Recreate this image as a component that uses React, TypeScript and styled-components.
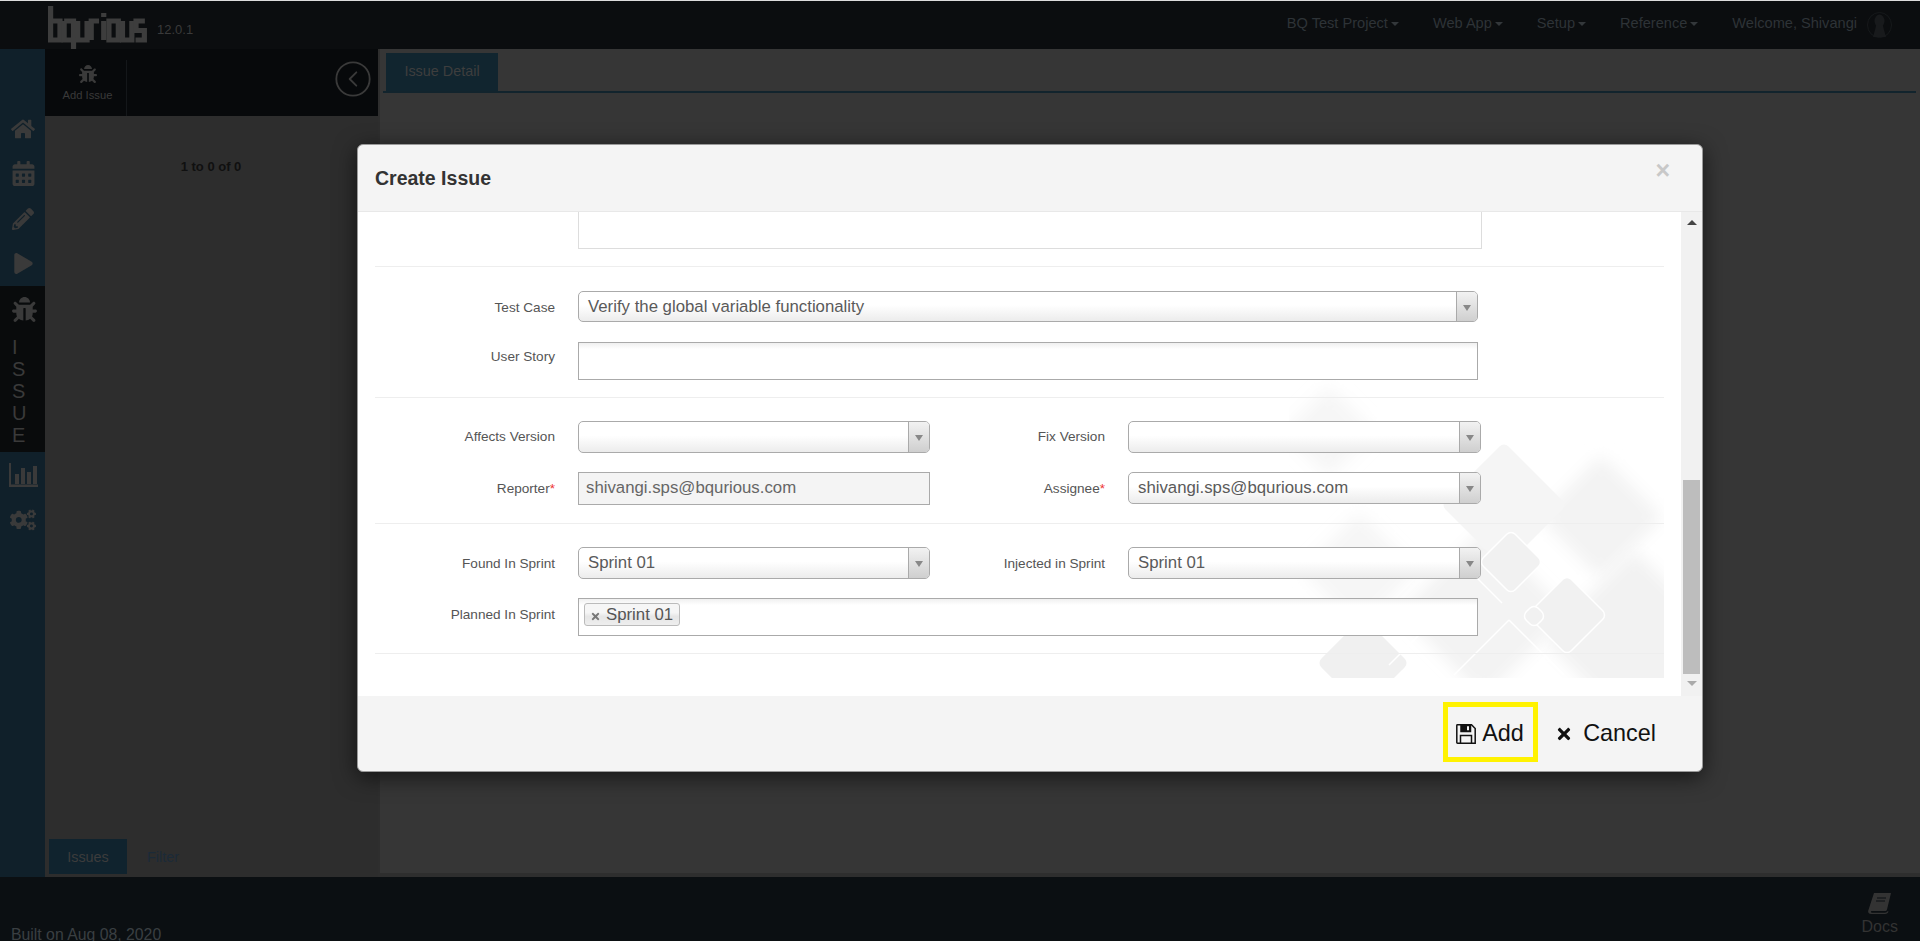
import React from 'react';
import styled, { createGlobalStyle } from 'styled-components';
import { CircleChevronLeft } from 'lucide-react';
import { FaBug, FaCalendarAlt, FaCogs, FaHome, FaPencilAlt, FaPlay, FaTimes } from 'react-icons/fa';

const GlobalStyle = createGlobalStyle`
  html, body {
    margin: 0;
    padding: 0;
    height: 100%;
    overflow: hidden;
    background: #2d2d2d;
    font-family: "Liberation Sans", Arial, sans-serif;
  }
  * { box-sizing: border-box; }
`;

const Page = styled.div`
  position: relative;
  width: 1920px;
  height: 941px;
  display: flex;
  flex-direction: column;
  overflow: hidden;
  border-top: 1px solid #dcdcdc;
`;

/* top bar */
const Header = styled.header`
  height: 48px;
  flex: none;
  display: flex;
  align-items: flex-start;
  background: #0b0d0f;
  padding: 5px 28px 0 48px;
`;

const Version = styled.span`
  margin: 16px 0 0 9px;
  font-size: 13px;
  line-height: 16px;
  color: #3a3a3a;
`;

const Nav = styled.nav`
  margin-left: auto;
  display: flex;
  align-items: center;
  gap: 34px;
  padding-top: 3px;
  height: 31px;
`;

const NavItem = styled.span`
  display: flex;
  align-items: center;
  gap: 3px;
  font-size: 14.6px;
  color: #2e3337;
`;

const Caret = styled.i`
  width: 0;
  height: 0;
  margin-top: 1px;
  border-top: 4px solid #33373a;
  border-left: 4px solid transparent;
  border-right: 4px solid transparent;
`;

const Welcome = styled.span`
  font-size: 14.6px;
  color: #2e3337;
`;

const Avatar = styled.svg`
  width: 25px;
  height: 26px;
  margin: 3px 0 0 -24px;
`;

/* main area */
const Main = styled.div`
  height: 828px;
  flex: none;
  display: flex;
`;

const Sidebar = styled.aside`
  width: 45px;
  flex: none;
  background: #10202a;
  padding-top: 57px;
  color: #3a3a3a;
`;

const SideItem = styled.div`
  height: 45px;
  display: flex;
  align-items: center;
  justify-content: center;
  padding-left: 1px;
`;

const SideActive = styled.div`
  height: 166px;
  background: #090b0c;
  padding: 11px 0 0 12px;
`;

const SideLetters = styled.div`
  margin-top: 10px;
  font-size: 20px;
  line-height: 22px;
  span { display: block; }
`;

const ListPanel = styled.section`
  width: 333px;
  flex: none;
  display: flex;
  flex-direction: column;
  background: #2d2d2d;
`;

const Toolbar = styled.div`
  height: 67px;
  flex: none;
  display: flex;
  justify-content: space-between;
  background: #07090b;
  padding: 11px 5px 0 0;
`;

const ToolButton = styled.div`
  width: 82px;
  display: flex;
  flex-direction: column;
  align-items: center;
  gap: 6px;
  padding: 5px 0 0 4px;
  border-right: 1px solid #14171a;
  color: #3a3a3a;
  font-size: 11.2px;
  line-height: 13px;
`;

const CollapseButton = styled.div`
  margin-top: -1px;
  color: #3a3a3a;
  height: 40px;
`;

const Pager = styled.div`
  margin-top: 44px;
  text-align: center;
  padding-right: 1px;
  font-size: 13px;
  font-weight: bold;
  line-height: 14px;
  color: #101010;
`;

const BottomTabs = styled.div`
  margin-top: auto;
  display: flex;
  align-items: center;
  padding: 0 0 3px 4px;
`;

const BottomTab = styled.div<{ $active?: boolean }>`
  width: ${p => (p.$active ? '78px' : 'auto')};
  height: 35px;
  margin-left: ${p => (p.$active ? '0' : '20px')};
  text-align: center;
  font-size: 14.4px;
  line-height: 37px;
  background: ${p => (p.$active ? '#10232e' : 'transparent')};
  color: ${p => (p.$active ? '#3c3c3c' : '#1b2a38')};
`;

const DetailPanel = styled.section`
  flex: 1;
  display: flex;
  background: #2e2e2e;
  padding: 0 0 4px 2px;
`;

const DetailInner = styled.div`
  flex: 1;
  background: #363636;
  padding: 4px 4px 0 3px;
`;

const TabStrip = styled.div`
  height: 40px;
  padding-left: 3px;
  border-bottom: 2px solid #12242d;
`;

const DetailTab = styled.div`
  width: 112px;
  height: 38px;
  text-align: center;
  font-size: 14.4px;
  line-height: 36px;
  background: #11252f;
  color: #3e3e3e;
`;

/* bottom bar */
const Footer = styled.footer`
  flex: 1;
  display: flex;
  justify-content: space-between;
  background: #0b0f12;
  overflow: hidden;
  padding: 16px 22px 0 11px;
`;

const BuiltOn = styled.div`
  margin-top: 33px;
  font-size: 15.8px;
  line-height: 18px;
  color: #3a3f42;
`;

const Docs = styled.div`
  display: flex;
  flex-direction: column;
  align-items: center;
  gap: 4px;
  font-size: 16px;
  line-height: 18px;
  color: #333;
`;

/* modal */
const Overlay = styled.div`
  position: absolute;
  inset: 0;
  padding: 143px 0 0 357px;
`;

const Modal = styled.div`
  width: 1346px;
  height: 628px;
  display: flex;
  flex-direction: column;
  background: #f4f4f4;
  border: 1px solid #9a9a9a;
  border-radius: 6px;
  overflow: hidden;
  box-shadow: 0 5px 22px rgba(0, 0, 0, 0.6);
`;

const ModalHeader = styled.div`
  height: 67px;
  flex: none;
  display: flex;
  justify-content: space-between;
  border-bottom: 1px solid #e8e8e8;
  padding: 0 32px 0 17px;
`;

const ModalTitle = styled.h4`
  margin: 23px 0 0;
  font-size: 19.5px;
  line-height: 20px;
  font-weight: bold;
  color: #333;
`;

const CloseMark = styled.span`
  margin-top: 12px;
  font-size: 25px;
  line-height: 26px;
  font-weight: bold;
  color: #c8c8c8;
`;

const ModalMiddle = styled.div`
  height: 484px;
  flex: none;
  display: flex;
`;

const FormBody = styled.div`
  position: relative;
  flex: 1;
  background: #fff;
  padding: 0 17px;
  overflow: hidden;
`;

const Watermark = styled.svg`
  position: absolute;
  right: 17px;
  bottom: 18px;
`;

const Section = styled.div<{ $top: number; $bottom: number; $gap: number }>`
  position: relative;
  display: flex;
  flex-direction: column;
  gap: ${p => p.$gap}px;
  padding: ${p => p.$top}px 0 ${p => p.$bottom}px;
  border-bottom: 1px solid #eee;
`;

const Row = styled.div`
  display: grid;
  grid-template-columns: 203px 352px 198px 353px;
  align-items: start;
`;

const Label = styled.label<{ $offset: number }>`
  padding: ${p => p.$offset}px 23px 0 0;
  text-align: right;
  font-size: 13.6px;
  line-height: 16px;
  color: #555;
  em { font-style: normal; color: #e33; }
`;

const TextStub = styled.div`
  grid-column: 2 / span 3;
  height: 37px;
  margin-right: -1px;
  background: #fff;
  border: 1px solid #ddd;
  border-top: 0;
`;

const Select = styled.div<{ $wide?: boolean; $height: number }>`
  grid-column: ${p => (p.$wide ? '2 / span 3' : 'auto')};
  width: ${p => (p.$wide ? '900px' : 'auto')};
  height: ${p => p.$height}px;
  display: flex;
  justify-content: space-between;
  background: linear-gradient(#fff 45%, #ececec);
  border: 1px solid #aaa;
  border-radius: 5px;
  font-size: 16.8px;
  color: #5a5a5a;
  overflow: hidden;
`;

const SelectValue = styled.span`
  padding-left: 9px;
  line-height: 30px;
`;

const SelectArrow = styled.span`
  width: 21px;
  height: 100%;
  flex: none;
  display: flex;
  align-items: center;
  justify-content: center;
  border-left: 1px solid #aaa;
  background: linear-gradient(#f2f2f2, #cfcfcf);
  &::after {
    content: '';
    margin-top: 2px;
    border-top: 6px solid #888;
    border-left: 4px solid transparent;
    border-right: 4px solid transparent;
  }
`;

const TextBox = styled.div`
  grid-column: 2 / span 3;
  width: 900px;
  height: 38px;
  padding: 4px 5px;
  background: linear-gradient(#f0f0f0, #fff 6px);
  border: 1px solid #aaa;
`;

const ReadOnlyBox = styled.div`
  height: 33px;
  padding-left: 7px;
  background: #f4f4f4;
  border: 1px solid #aaa;
  font-size: 16.8px;
  line-height: 30px;
  color: #666;
`;

const Chip = styled.span`
  display: inline-flex;
  align-items: center;
  gap: 5px;
  height: 23px;
  padding: 0 6px 0 5px;
  background: linear-gradient(#f6f6f6 40%, #e6e6e6 60%, #eee);
  border: 1px solid #bbb;
  border-radius: 3px;
  font-size: 16.8px;
  color: #555;
  svg { margin-top: 3px; color: #777; }
`;

const ScrollTrack = styled.div`
  width: 21px;
  flex: none;
  display: flex;
  flex-direction: column;
  align-items: center;
  background: #f1f1f1;
  padding-top: 8px;
`;

const ScrollArrow = styled.i<{ $up?: boolean }>`
  width: 0;
  height: 0;
  border-left: 5px solid transparent;
  border-right: 5px solid transparent;
  border-bottom: ${p => (p.$up ? '5px solid #444' : '0')};
  border-top: ${p => (p.$up ? '0' : '5px solid #aaa')};
`;

const ScrollThumb = styled.div`
  width: 17px;
  height: 194px;
  margin: 255px 0 7px;
  background: #bdbdbd;
`;

const ModalFooter = styled.div`
  flex: 1;
  display: flex;
  justify-content: flex-end;
  align-items: flex-start;
  gap: 17px;
  padding: 6px 46px 0 0;
`;

const FooterButton = styled.div<{ $hot?: boolean; $gap: number }>`
  height: 60px;
  display: flex;
  align-items: center;
  gap: ${p => p.$gap}px;
  width: ${p => (p.$hot ? '95px' : 'auto')};
  padding: ${p => (p.$hot ? '3px 0 0 8px' : '3px 0 0')};
  border: ${p => (p.$hot ? '5px solid #fff200' : '0')};
  font-size: 23.4px;
  color: #111;
`;

// bqurious block logo, drawn as stroked segments
const LOGO = [
  'M2.5 0V34H11.5V15H2.5',
  'M15.5 15H24.5V36M15.5 15V34H24.5M24.5 36V47',
  'M28.5 15V34H37.5V15',
  'M41.5 34V15H49',
  'M53.5 15V34M53.5 7V11',
  'M58.5 15H67.5V34H58.5Z',
  'M71.5 15V34H80.5V15',
  'M93 15H84.5V24.5H92.5V34H84',
];

const Logo = () => (
  <svg width="100" height="47" viewBox="0 0 96 47" preserveAspectRatio="none" fill="none" stroke="#3d3d3d" strokeWidth="5">
    {LOGO.map(d => <path key={d} d={d} />)}
  </svg>
);

const BarsIcon = () => (
  <svg width="29" height="24" viewBox="0 0 29 24" fill="currentColor">
    <path d="M0 0h2v21.5h29V24H0z" />
    <rect x="6" y="11" width="4" height="10" />
    <rect x="12" y="5" width="4" height="16" />
    <rect x="18" y="9" width="4" height="12" />
    <rect x="24" y="3" width="4" height="18" />
  </svg>
);

const BookIcon = () => (
  <svg width="24" height="21" viewBox="0 0 24 21" fill="#333">
    <path d="M6 0h17l-4 16.5c-.3 1-1 1.5-2 1.5H4c-.8 0-1.300.6-1 1.200.1.300.5.500 1 .5h13c1.500 0 2-.4 2.800-1.700l.7.600C20 20 19 21 17 21H3c-2 0-3.200-1.500-2.800-3.200z" />
    <path d="M9 5h9M8 8h9" stroke="#0b0f12" strokeWidth="1.200" />
  </svg>
);

const SaveIcon = () => (
  <svg width="20" height="20" viewBox="0 0 20 20" fill="none" stroke="#111" strokeWidth="1.500" style={{ flex: 'none' }}>
    <path d="M1.500.8H15.500L19.200 4.500V19.200H1.500C1 19.200.8 19 .8 18.500V1.500C.8 1 1 .8 1.500.8Z" />
    <path d="M5 1h9.500v6.500H5z" fill="#111" />
    <path d="M11 2.200h2v4h-2z" fill="#f4f4f4" stroke="none" />
    <path d="M4.500 19V11.500H15.500V19" />
  </svg>
);

// one soft or sharp rounded diamond of the form's background art
const Diamond = ({ x, y, r, fill = '#f0f0f0', stroke, blur }: { x: number; y: number; r: number; fill?: string; stroke?: string; blur?: boolean }) => {
  const side = r * Math.SQRT2;
  return (
    <rect
      x={x - side / 2}
      y={y - side / 2}
      width={side}
      height={side}
      rx="6"
      fill={fill}
      stroke={stroke}
      strokeWidth={stroke ? 1.500 : 0}
      filter={blur ? 'url(#wm-soft)' : undefined}
      transform={`rotate(45 ${x} ${y})`}
    />
  );
};

const FormArt = () => (
  <Watermark width="375" height="303" viewBox="0 0 375 303">
    <defs>
      <filter id="wm-soft" x="-30%" y="-30%" width="160%" height="160%">
        <feGaussianBlur stdDeviation="8" />
      </filter>
      <clipPath id="wm-clip"><rect width="375" height="303" /></clipPath>
    </defs>
    <g clipPath="url(#wm-clip)">
      <Diamond x={40} y={57} r={46} fill="#f6f6f6" blur />
      <Diamond x={70} y={195} r={58} fill="#f6f6f6" blur />
      <Diamond x={312} y={142} r={62} fill="#f3f3f3" blur />
      <Diamond x={345} y={265} r={90} fill="#f2f2f2" blur />
      <Diamond x={195} y={238} r={85} fill="#f3f3f3" blur />
      <Diamond x={215} y={130} r={63} fill="#f5f5f5" />
      <Diamond x={74} y={288} r={46} fill="#f0f0f0" />
      <Diamond x={222} y={187} r={32} fill="#f1f1f1" stroke="#fff" />
      <Diamond x={278} y={240} r={40} fill="#f1f1f1" stroke="#fff" />
      <Diamond x={245} y={241} r={12} fill="#f1f1f1" stroke="#fff" />
      <path d="M105 158l52-52M105 158l36 36" fill="none" stroke="#fff" strokeWidth="1.500" />
      <path d="M165 300l55-55M220 245l55 55M100 250l55 53M100 290l55-55M165 180l48 48" fill="none" stroke="#fff" strokeWidth="1.500" />
    </g>
  </Watermark>
);

export default function App() {
  return (
    <>
      <GlobalStyle />
      <Page>
        <Header>
          <Logo />
          <Version>12.0.1</Version>
          <Nav>
            {['BQ Test Project', 'Web App', 'Setup', 'Reference'].map(item => (
              <NavItem key={item}>{item}<Caret /></NavItem>
            ))}
            <Welcome>Welcome, Shivangi</Welcome>
            <Avatar viewBox="0 0 25 26">
              <ellipse cx="12.500" cy="13" rx="12" ry="12.500" fill="none" stroke="#16191b" />
              <ellipse cx="12.500" cy="9" rx="5" ry="6.500" fill="#181a1c" />
              <path d="M9 14h7l1 4 2 7H6l2-7z" fill="#181a1c" />
            </Avatar>
          </Nav>
        </Header>

        <Main>
          <Sidebar>
            <SideItem><FaHome size={24} /></SideItem>
            <SideItem><FaCalendarAlt size={25} /></SideItem>
            <SideItem><FaPencilAlt size={22} /></SideItem>
            <SideItem><FaPlay size={21} /></SideItem>
            <SideActive>
              <FaBug size={25} />
              <SideLetters>
                {'ISSUE'.split('').map((ch, i) => <span key={i}>{ch}</span>)}
              </SideLetters>
            </SideActive>
            <SideItem><BarsIcon /></SideItem>
            <SideItem><FaCogs size={26} /></SideItem>
          </Sidebar>

          <ListPanel>
            <Toolbar>
              <ToolButton>
                <FaBug size={18} />
                Add Issue
              </ToolButton>
              <CollapseButton><CircleChevronLeft size={40} strokeWidth={1.1} /></CollapseButton>
            </Toolbar>
            <Pager>1 to 0 of 0</Pager>
            <BottomTabs>
              <BottomTab $active>Issues</BottomTab>
              <BottomTab>Filter</BottomTab>
            </BottomTabs>
          </ListPanel>

          <DetailPanel>
            <DetailInner>
              <TabStrip><DetailTab>Issue Detail</DetailTab></TabStrip>
            </DetailInner>
          </DetailPanel>
        </Main>

        <Footer>
          <BuiltOn>Built on Aug 08, 2020</BuiltOn>
          <Docs><BookIcon />Docs</Docs>
        </Footer>

        <Overlay>
          <Modal>
            <ModalHeader>
              <ModalTitle>Create Issue</ModalTitle>
              <CloseMark>×</CloseMark>
            </ModalHeader>

            <ModalMiddle>
              <FormBody>
                <FormArt />
                <Section $top={0} $bottom={17} $gap={0}>
                  <Row>
                    <span />
                    <TextStub />
                  </Row>
                </Section>
                <Section $top={24} $bottom={17} $gap={20}>
                  <Row>
                    <Label $offset={9}>Test Case</Label>
                    <Select $wide $height={31}>
                      <SelectValue>Verify the global variable functionality</SelectValue>
                      <SelectArrow />
                    </Select>
                  </Row>
                  <Row>
                    <Label $offset={7}>User Story</Label>
                    <TextBox />
                  </Row>
                </Section>
                <Section $top={23} $bottom={18} $gap={19}>
                  <Row>
                    <Label $offset={8}>Affects Version</Label>
                    <Select $height={32}><SelectValue /><SelectArrow /></Select>
                    <Label $offset={8}>Fix Version</Label>
                    <Select $height={32}><SelectValue /><SelectArrow /></Select>
                  </Row>
                  <Row>
                    <Label $offset={9}>Reporter<em>*</em></Label>
                    <ReadOnlyBox>shivangi.sps@bqurious.com</ReadOnlyBox>
                    <Label $offset={9}>Assignee<em>*</em></Label>
                    <Select $height={32}>
                      <SelectValue>shivangi.sps@bqurious.com</SelectValue>
                      <SelectArrow />
                    </Select>
                  </Row>
                </Section>
                <Section $top={23} $bottom={17} $gap={19}>
                  <Row>
                    <Label $offset={9}>Found In Sprint</Label>
                    <Select $height={32}>
                      <SelectValue>Sprint 01</SelectValue>
                      <SelectArrow />
                    </Select>
                    <Label $offset={9}>Injected in Sprint</Label>
                    <Select $height={32}>
                      <SelectValue>Sprint 01</SelectValue>
                      <SelectArrow />
                    </Select>
                  </Row>
                  <Row>
                    <Label $offset={9}>Planned In Sprint</Label>
                    <TextBox>
                      <Chip><FaTimes size={11} />Sprint 01</Chip>
                    </TextBox>
                  </Row>
                </Section>
              </FormBody>
              <ScrollTrack>
                <ScrollArrow $up />
                <ScrollThumb />
                <ScrollArrow />
              </ScrollTrack>
            </ModalMiddle>

            <ModalFooter>
              <FooterButton $hot $gap={6}><SaveIcon />Add</FooterButton>
              <FooterButton $gap={10}><FaTimes size={18} />Cancel</FooterButton>
            </ModalFooter>
          </Modal>
        </Overlay>
      </Page>
    </>
  );
}
